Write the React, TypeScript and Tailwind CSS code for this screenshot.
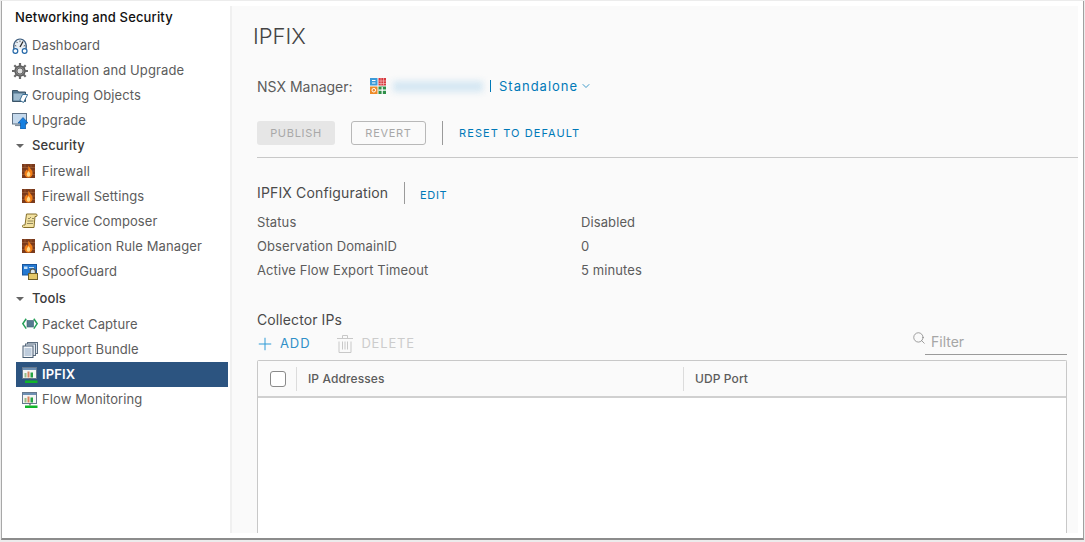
import React from "react"
import { ChevronDown, Plus, Search } from "lucide-react"

const font = { fontFamily: '"Inter", "Noto Sans", sans-serif' }

function DashboardIcon() {
  return (
    <svg width="16" height="16" viewBox="0 0 16 16" fill="none">
      <path d="M2 11.5C0.5 5 4 1 8 1s7.5 4 6 10.5" stroke="#3f5f80" strokeWidth="1.2" fill="#e8eef4" />
      <path d="M8 9 11 3.5" stroke="#2a2a2a" strokeWidth="1.3" />
      <path d="M2.8 7.5 4.3 8M4.5 3.8 5.5 5M8 2.5v1.6M13.2 7.5 11.7 8" stroke="#4a4a4a" strokeWidth="0.9" />
      <circle cx="3.4" cy="13" r="2.4" fill="#fff" stroke="#2468a8" strokeWidth="1.2" />
      <circle cx="12.6" cy="13" r="2.4" fill="#fff" stroke="#2468a8" strokeWidth="1.2" />
    </svg>
  )
}

function GearIcon() {
  return (
    <svg width="16" height="16" viewBox="0 0 16 16" fill="none">
      <circle cx="8" cy="8" r="5" fill="#8c8c8c" stroke="#5a5a5a" strokeWidth="1.4" />
      <path d="M8 0v3.5M8 12.5V16M0 8h3.5M12.5 8H16M2.3 2.3l2.5 2.5M11.2 11.2l2.5 2.5M13.7 2.3l-2.5 2.5M4.8 11.2l-2.5 2.5" stroke="#6a6a6a" strokeWidth="2.2" />
      <circle cx="8" cy="8" r="3" fill="#e0e0e0" stroke="#555" strokeWidth="0.8" />
    </svg>
  )
}

function FolderIcon() {
  return (
    <svg width="16" height="16" viewBox="0 0 16 16" fill="none">
      <path d="M.5 2.5h5l1 1.5h7v9.5H.5z" fill="#54778f" stroke="#3c5568" />
      <path d="M1.5 5.5h11.5v7H1.5z" fill="#9fbcd0" />
      <path d="M10.5 6.5l5.2 0-4.2 8-3.7-2.2z" fill="#fff" stroke="#3d7299" />
    </svg>
  )
}

function UpgradeIcon() {
  return (
    <svg width="16" height="16" viewBox="0 0 16 16" fill="none">
      <rect x="0.5" y="0.5" width="14" height="10.5" fill="#c5d9ec" stroke="#5f7286" />
      <rect x="3" y="11.5" width="6" height="1.6" fill="#7f8e9c" />
      <path d="M11 4.5 16 10H13.5V16H8.5V10H6z" fill="#1780e0" stroke="#0b56a3" strokeWidth="0.7" />
    </svg>
  )
}

function FirewallIcon() {
  return (
    <svg width="13" height="14" viewBox="0 0 13 14" fill="none" className="-mt-[2px]">
      <rect width="13" height="14" fill="#7a3a1c" />
      <path d="M0 3.5h13M0 7h13M0 10.5h13M3 0v3.5M9 0v3.5M6 3.5V7M3 7v3.5M10 7v3.5" stroke="#a96a3e" strokeWidth="0.6" />
      <path d="M6.5 1.5C7.5 4.5 11 6 10.5 9.8 10 13 8.2 13.6 6.5 13.6S3 13 2.6 9.8C2.4 7.8 4 7.2 4.2 5.4c1 .6 1.6 1.2 1.7 2C6.8 5.8 6 3.4 6.5 1.5z" fill="#f47f16" />
      <path d="M6.5 7c1 1.4 2 2.3 1.8 3.7-.2 1.2-1 2-1.8 2s-1.6-.8-1.8-2C4.5 9.3 5.9 8.4 6.5 7z" fill="#ffd98a" />
    </svg>
  )
}

function ScrollIcon() {
  return (
    <svg width="16" height="16" viewBox="0 0 16 16" fill="none" className="-mt-[1px]">
      <path d="M4.5 1h9.5c1.5 0 1.5 2.5 0 2.5H13L12 14.5H1.5c-1.5 0-1.5-2.5 0-2.5H3z" fill="#f2e1a0" stroke="#85702c" />
      <path d="M6 5l1 1 2-2M10 5.5h2M5.5 8h6M5 10.5h6" stroke="#77704a" strokeWidth="0.8" />
    </svg>
  )
}

function SpoofIcon() {
  return (
    <svg width="16" height="16" viewBox="0 0 16 16" fill="none">
      <rect x="0.5" y="0.5" width="14" height="10.5" fill="#2479d2" stroke="#1a569c" />
      <path d="M2 2.5h3.5v2.5H2zM7 3h5v1H7z" fill="#c3e0f8" />
      <path d="M8.2 9.5V7.5a2.6 2.6 0 0 1 5.2 0v2" fill="#d9e6ef" stroke="#58584a" strokeWidth="1.2" />
      <rect x="6.5" y="9.5" width="9" height="6" fill="#e3c768" stroke="#6f5f28" />
    </svg>
  )
}

function CaptureIcon() {
  return (
    <svg width="16" height="16" viewBox="0 0 16 16" fill="none" className="-mt-[2px]">
      <rect x="5" y="4.5" width="6.5" height="6.5" fill="#557a90" stroke="#3f5d70" strokeWidth="0.6" />
      <path d="M4.2 2.8.8 7.7l3.4 4.9M11.8 2.8l3.4 4.9-3.4 4.9" stroke="#27a05a" strokeWidth="1.5" />
    </svg>
  )
}

function BundleIcon() {
  return (
    <svg width="16" height="16" viewBox="0 0 16 16" fill="none">
      <rect x="5.5" y="0.5" width="10" height="11" fill="#dfe7ef" stroke="#5f7082" />
      <rect x="3.5" y="2" width="10" height="11.5" fill="#e6edf4" stroke="#5f7082" />
      <rect x="1" y="4" width="10" height="11.5" fill="#f3f6f9" stroke="#485d72" />
      <path d="M2.5 7h7M2.5 9h7M2.5 11h7M2.5 13h7" stroke="#6f90b3" strokeWidth="0.8" />
    </svg>
  )
}

function MonitorIcon() {
  return (
    <svg width="16" height="16" viewBox="0 0 16 16" fill="none">
      <rect x="0.5" y="0.5" width="14" height="11" fill="#f4f4f4" stroke="#66798e" />
      <rect x="1" y="1" width="13" height="2" fill="#6e90b3" />
      <rect x="2.5" y="6" width="2" height="4.5" fill="#98bd88" />
      <rect x="5.5" y="4.5" width="2" height="6" fill="#d98560" />
      <rect x="8.5" y="5.5" width="2.5" height="5" fill="#24a243" />
      <path d="M8 11.5v2" stroke="#555" strokeWidth="1.2" />
      <rect x="3" y="13.5" width="12.5" height="2.5" fill="#11b52a" />
    </svg>
  )
}

function ManagerIcon() {
  return (
    <svg width="16" height="16" viewBox="0 0 16 16" fill="none">
      <rect width="7.5" height="7.5" fill="#3d9bd8" />
      <rect x="8.5" width="7.5" height="7.5" fill="#d8393f" />
      <rect y="8.5" width="7.5" height="7.5" fill="#ee8a28" />
      <rect x="8.5" y="8.5" width="7.5" height="7.5" fill="#2f8f48" />
      <path d="M2 2.5h3.5M2 5h3.5" stroke="#fff" />
      <path d="M8.5 3h7.5M8.5 5.5h7.5M11 0v7.5M13.5 0v7.5" stroke="#f7c9c9" strokeWidth="0.6" />
      <circle cx="3.8" cy="12.2" r="1.8" stroke="#fff" />
      <path d="M12.2 9v7M8.5 12.2H16" stroke="#fff" strokeWidth="1.2" />
    </svg>
  )
}

function TrashIcon() {
  return (
    <svg width="16" height="18" viewBox="0 0 16 18" fill="none" stroke="#c8c8c8" strokeWidth="1">
      <path d="M0 3.5h16M5.5 3.5V.5h5v3" />
      <path d="M2 6.5v11h12v-11" />
      <path d="M5.5 6.5v8M8 6.5v8M10.5 6.5v8" />
    </svg>
  )
}

function NavRow({ icon, label, active }: { icon: React.ReactNode; label: string; active?: boolean }) {
  return (
    <div className={`flex h-[25px] w-[212px] items-center pl-[6px] text-[13px] tracking-[0.1px] ${active ? "bg-[#2c5480] font-semibold text-white" : "text-[#5c5c5c]"}`}>
      <span className="flex w-[20px] shrink-0 items-center">{icon}</span>
      {label}
    </div>
  )
}

function TopRow({ icon, label }: { icon: React.ReactNode; label: string }) {
  return (
    <div className="flex h-[25px] items-center pl-[10px] text-[13px] tracking-[0.1px] text-[#5c5c5c]">
      <span className="flex w-[20px] shrink-0 items-center">{icon}</span>
      {label}
    </div>
  )
}

function SectionRow({ label }: { label: string }) {
  return (
    <div className="flex h-[25px] items-center pl-[14px] text-[13px] font-medium tracking-[0.1px] text-[#3a3a3a]">
      <span className="mr-[8px] h-0 w-0 border-x-[4px] border-t-[4px] border-x-transparent border-t-[#666]" />
      {label}
    </div>
  )
}

function InfoRow({ label, value }: { label: string; value: string }) {
  return (
    <div className="flex h-[24px] items-center text-[13px] tracking-[0.1px] text-[#5c5c5c]">
      <span className="w-[324px]">{label}</span>
      <span>{value}</span>
    </div>
  )
}

export default function App() {
  return (
    <div style={font} className="h-[542px] w-[1085px] overflow-hidden bg-[#ececec] pt-px pl-px">
      <div className="flex h-[539px] w-[1083px] border-r border-b-2 border-l border-r-[#a0a0a0] border-b-[#8c8c8c] border-l-[#a8a8a8] bg-white">
        <aside className="w-[228px] shrink-0">
          <h1 className="flex h-[32px] items-center pt-[1px] pl-[13px] text-[13px] font-medium tracking-[0.15px] text-[#111]">Networking and Security</h1>
          <div>
            <TopRow icon={<DashboardIcon />} label="Dashboard" />
            <TopRow icon={<GearIcon />} label="Installation and Upgrade" />
            <TopRow icon={<FolderIcon />} label="Grouping Objects" />
            <TopRow icon={<UpgradeIcon />} label="Upgrade" />
            <SectionRow label="Security" />
          </div>
          <div className="mt-px ml-[14px]">
            <NavRow icon={<FirewallIcon />} label="Firewall" />
            <NavRow icon={<FirewallIcon />} label="Firewall Settings" />
            <NavRow icon={<ScrollIcon />} label="Service Composer" />
            <NavRow icon={<FirewallIcon />} label="Application Rule Manager" />
            <NavRow icon={<SpoofIcon />} label="SpoofGuard" />
          </div>
          <div className="mt-[2px]">
            <SectionRow label="Tools" />
          </div>
          <div className="mt-px ml-[14px]">
            <NavRow icon={<CaptureIcon />} label="Packet Capture" />
            <NavRow icon={<BundleIcon />} label="Support Bundle" />
            <NavRow icon={<MonitorIcon />} label="IPFIX" active />
            <NavRow icon={<MonitorIcon />} label="Flow Monitoring" />
          </div>
        </aside>

        <main className="mt-[5px] mb-[5px] flex w-[848px] shrink-0 flex-col overflow-hidden border-l-2 border-[#f0f0f0] bg-[#fafafa] pl-[25px]">
          <h2 className="-ml-[4px] flex h-[60px] items-center pt-[1px] text-[22px] font-light text-[#444]">IPFIX</h2>
          <div className="mt-[4px] flex h-[32px] items-center text-[14px] text-[#5c5c5c]">
            <span className="w-[113px]">NSX Manager:</span>
            <ManagerIcon />
            <span className="mx-[7px] h-[11px] w-[90px] bg-[#d5e7f3] blur-[3px]" />
            <span className="h-[12px] w-px bg-[#0079b8]" />
            <span className="mt-[2px] ml-[8px] text-[13px] tracking-[1px] text-[#0079b8]">Standalone</span>
            <ChevronDown size={12} strokeWidth={1.5} className="ml-[2px] text-[#0079b8]" />
          </div>
          <div className="mt-[19px] flex items-center border-b border-[#c8c8c8] pb-[12px]">
            <button className="h-[24px] w-[78px] rounded-[3px] bg-[#e6e6e6] text-[11px] tracking-[0.7px] text-[#a8a8a8]">PUBLISH</button>
            <button className="ml-[16px] h-[24px] w-[75px] rounded-[3px] border border-[#b8b8b8] text-[11px] tracking-[0.7px] text-[#a8a8a8]">REVERT</button>
            <span className="ml-[16px] h-[24px] w-px bg-[#9a9a9a]" />
            <span className="ml-[16px] text-[11px] tracking-[1.1px] text-[#0079b8]">RESET TO DEFAULT</span>
          </div>
          <div className="mt-[24px] flex h-[22px] items-center">
            <span className="mb-[2px] w-[147px] text-[14px] tracking-[0.15px] text-[#4a4a4a]">IPFIX Configuration</span>
            <span className="h-[22px] w-px bg-[#9a9a9a]" />
            <span className="mt-[4px] ml-[15px] text-[11px] tracking-[0.7px] text-[#0079b8]">EDIT</span>
          </div>
          <div className="mt-[7px]">
            <InfoRow label="Status" value="Disabled" />
            <InfoRow label="Observation DomainID" value="0" />
            <InfoRow label="Active Flow Export Timeout" value="5 minutes" />
          </div>
          <h3 className="mt-[26px] mb-px flex h-[20px] items-center text-[14px] tracking-[0.1px] text-[#4a4a4a]">Collector IPs</h3>
          <div className="mr-[11px] flex h-[28px] items-center justify-between">
            <div className="flex items-center">
              <Plus size={20} strokeWidth={1.2} className="-ml-[2px] text-[#2f9bd6]" />
              <span className="ml-[5px] text-[13px] tracking-[0.9px] text-[#2f8fc8]">ADD</span>
              <span className="ml-[27px]"><TrashIcon /></span>
              <span className="ml-[8px] text-[13px] tracking-[0.8px] text-[#cccccc]">DELETE</span>
            </div>
            <div className="relative flex items-center">
              <Search size={14} strokeWidth={1.2} className="absolute -top-[2px] -left-[13px] text-[#777]" />
              <div className="mt-[2px] h-[20px] w-[142px] border-b border-[#9a9a9a] pl-[6px] text-[14px] leading-[14px] text-[#a6a6a6]">Filter</div>
            </div>
          </div>
          <div className="mt-[2px] mr-[11px] flex-1 rounded-t-[2px] border border-b-0 border-[#c8c8c8] bg-white">
            <div className="flex h-[37px] items-center border-b-2 border-[#d0d0d0] bg-[#fafafa] text-[12px] font-medium tracking-[0.1px] text-[#5c5c5c]">
              <span className="ml-[12px] h-[16px] w-[16px] rounded-[3px] border border-[#8a8a8a] bg-white" />
              <span className="ml-[10px] h-[24px] w-px bg-[#dcdcdc]" />
              <span className="ml-[11px] w-[375px]">IP Addresses</span>
              <span className="h-[24px] w-px bg-[#dcdcdc]" />
              <span className="ml-[11px]">UDP Port</span>
            </div>
          </div>
        </main>
      </div>
    </div>
  )
}
